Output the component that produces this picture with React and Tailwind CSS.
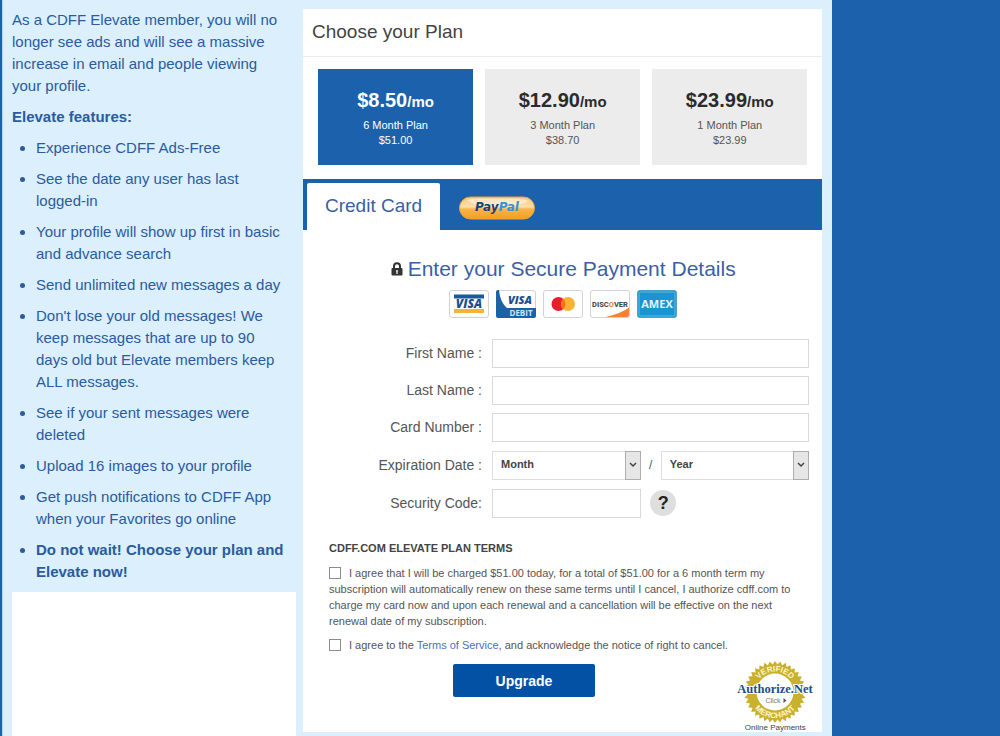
import { useState } from "react";

const features = [
  "Experience CDFF Ads-Free",
  "See the date any user has last logged-in",
  "Your profile will show up first in basic and advance search",
  "Send unlimited new messages a day",
  "Don't lose your old messages! We keep messages that are up to 90 days old but Elevate members keep ALL messages.",
  "See if your sent messages were deleted",
  "Upload 16 images to your profile",
  "Get push notifications to CDFF App when your Favorites go online",
];

const plans = [
  { id: 6, price: "$8.50", name: "6 Month Plan", total: "$51.00" },
  { id: 3, price: "$12.90", name: "3 Month Plan", total: "$38.70" },
  { id: 1, price: "$23.99", name: "1 Month Plan", total: "$23.99" },
];

const months = ["01", "02", "03", "04", "05", "06", "07", "08", "09", "10", "11", "12"];
const years = ["2024", "2025", "2026", "2027", "2028", "2029", "2030"];

const inputClass =
  "block h-[29px] w-full min-w-0 border border-[#d9d9d9] bg-white px-2 text-xs text-[#333] outline-none";

const Sidebar = () => (
  <aside className="flex flex-col pt-[9px] text-[15px] leading-[22px] text-[#2a5b9d]">
    <div className="pr-[10px]">
      <p>
        As a CDFF Elevate member, you will no longer see ads and will see a
        massive increase in email and people viewing your profile.
      </p>
      <h2 className="mt-[9px] font-bold">Elevate features:</h2>
      <ul className="mt-[9px] flex list-disc flex-col gap-[9px] pl-6">
        {features.map((feature) => (
          <li key={feature}>{feature}</li>
        ))}
        <li className="font-bold">Do not wait! Choose your plan and Elevate now!</li>
      </ul>
    </div>
    <div className="mt-[9px] flex-1 bg-white" />
  </aside>
);

const PlanCard = ({ plan, active, onSelect }) => (
  <button
    type="button"
    onClick={() => onSelect(plan.id)}
    className={
      active
        ? "flex h-24 flex-col items-center justify-center bg-[#1c61ab] pb-[2px] text-[11px] leading-[15px] text-white"
        : "flex h-24 flex-col items-center justify-center bg-[#ececec] pb-[2px] text-[11px] leading-[15px] text-[#555]"
    }
  >
    <span
      className={
        active
          ? "text-xl leading-8 font-bold text-white"
          : "text-xl leading-8 font-bold text-[#2b2b2b]"
      }
    >
      {plan.price}
      <span className="text-[15px]">/mo</span>
    </span>
    <span>{plan.name}</span>
    <span>{plan.total}</span>
  </button>
);

const PayPalBadge = () => (
  <svg width="76" height="24" viewBox="0 0 76 24" role="img" aria-label="PayPal">
    <defs>
      <linearGradient id="gold" x1="0" y1="0" x2="0" y2="1">
        <stop offset="0" stopColor="#fbc877" />
        <stop offset="0.45" stopColor="#fddfae" />
        <stop offset="0.55" stopColor="#f9b549" />
        <stop offset="1" stopColor="#f59d20" />
      </linearGradient>
    </defs>
    <rect x="0.5" y="1" width="75" height="22" rx="11" fill="url(#gold)" stroke="#e9a046" />
    <path d="M8 4Q12 2.5 18 2.5H58Q65 2.5 69 5Q62 10 38 11Q14 10 8 4Z" fill="#fff" opacity="0.5" />
    <g
      fontFamily="'DejaVu Sans', sans-serif"
      fontSize="12"
      fontWeight="700"
      fontStyle="italic"
    >
      <text x="38" y="15" textAnchor="middle" fill="#1d3f77">
        Pay<tspan fill="#3792cd">Pal</tspan>
      </text>
    </g>
  </svg>
);

const LockIcon = () => (
  <svg width="12" height="14" viewBox="0 0 12 14" aria-hidden="true">
    <path d="M3 6V4.2a3 3 0 0 1 6 0V6" fill="none" stroke="#333" strokeWidth="2" />
    <rect x="0.5" y="6" width="11" height="7.5" rx="1" fill="#333" />
    <path d="M6 8a1 1 0 0 1 .6 1.8V12H5.4V9.8A1 1 0 0 1 6 8Z" fill="#fff" />
  </svg>
);

const logoFont = "'Open Sans', 'Liberation Sans', sans-serif";

const VisaLogo = () => (
  <svg width="40" height="28" viewBox="0 0 40 28" role="img" aria-label="Visa">
    <rect x="0.5" y="0.5" width="39" height="27" rx="2.5" fill="#fff" stroke="#d2d2d2" />
    <rect x="5" y="4.5" width="30" height="4" fill="#1a5a9c" />
    <rect x="5" y="19" width="30" height="4" fill="#f3b33d" />
    <text x="20" y="18" textAnchor="middle" fontFamily={logoFont} fontSize="12" fontWeight="800" fontStyle="italic" fill="#1d4f8c">VISA</text>
  </svg>
);

const VisaDebitLogo = () => (
  <svg width="40" height="28" viewBox="0 0 40 28" role="img" aria-label="Visa Debit">
    <rect x="0.5" y="0.5" width="39" height="27" rx="2.5" fill="#fff" stroke="#d2d2d2" />
    <path d="M0 2Q0 0 2 0H3Q4 12 11 18H40V26Q40 28 38 28H2Q0 28 0 26Z" fill="#1b62a5" />
    <text x="24" y="14" textAnchor="middle" fontFamily={logoFont} fontSize="11" fontWeight="800" fontStyle="italic" fill="#1d4f8c">VISA</text>
    <text x="25" y="26" textAnchor="middle" fontFamily={logoFont} fontSize="8" fontWeight="700" fill="#cfe5f7">DEBIT</text>
  </svg>
);

const MastercardLogo = () => (
  <svg width="40" height="28" viewBox="0 0 40 28" role="img" aria-label="Mastercard">
    <rect x="0.5" y="0.5" width="39" height="27" rx="2.5" fill="#fff" stroke="#d2d2d2" />
    <circle cx="15.5" cy="14" r="7" fill="#e5202c" />
    <circle cx="25" cy="14" r="7" fill="#f9b233" />
    <path d="M20.2 8.8a7 7 0 0 1 0 10.4a7 7 0 0 1 0-10.4Z" fill="#f47216" />
  </svg>
);

const DiscoverLogo = () => (
  <svg width="40" height="28" viewBox="0 0 40 28" role="img" aria-label="Discover">
    <rect x="0.5" y="0.5" width="39" height="27" rx="2.5" fill="#fff" stroke="#d2d2d2" />
    <path d="M16 27Q32 23 39 17.5V25Q39 27 37 27Z" fill="#f58233" />
    <text x="20" y="17" textAnchor="middle" fontFamily="Roboto, sans-serif" fontSize="7.5" fontWeight="800" fill="#4a4a4a">
      DISC<tspan fill="#f58233">O</tspan>VER
    </text>
  </svg>
);

const AmexLogo = () => (
  <svg width="40" height="28" viewBox="0 0 40 28" role="img" aria-label="American Express">
    <rect x="0.5" y="0.5" width="39" height="27" rx="2.5" fill="#1b94d2" stroke="#4a9fc9" />
    <rect x="2" y="2" width="36" height="24" rx="1.5" fill="none" stroke="#5cb8e4" />
    <text x="20" y="18" textAnchor="middle" fontFamily={logoFont} fontSize="11" fontWeight="700" fill="#e2f4fd">AMEX</text>
  </svg>
);

const TextRow = ({ id, label }) => (
  <>
    <label htmlFor={id} className="pb-[2px] text-right">{label}</label>
    <input id={id} type="text" className={inputClass} />
  </>
);

const SelectBox = ({ label, options }) => (
  <div className="relative min-w-0 flex-1">
    <select
      aria-label={label}
      className="block h-[29px] w-full appearance-none border border-[#dedede] bg-white px-2 text-[11px] font-bold text-[#444] outline-none"
    >
      <option>{label}</option>
      {options.map((option) => (
        <option key={option}>{option}</option>
      ))}
    </select>
    <span className="pointer-events-none absolute inset-y-0 right-0 flex w-4 items-center justify-center border border-[#adadad] bg-[#e6e6e6]">
      <svg width="8" height="6" viewBox="0 0 8 6" aria-hidden="true">
        <path d="M1 1l3 3l3-3" fill="none" stroke="#444" strokeWidth="1.5" />
      </svg>
    </span>
  </div>
);

const Checkbox = () => (
  <input
    type="checkbox"
    className="mr-2 inline-block size-3 appearance-none border border-[#8c8c8c] bg-white align-[-2px] checked:bg-[#1c61ab]"
  />
);

// Gear-like outline of the seal: alternating outer and inner points
const sealTeeth = Array.from({ length: 72 }, (_, i) => {
  const r = i % 2 ? 27.5 : 31;
  const a = (i / 72) * Math.PI * 2;
  return `${(38 + r * Math.cos(a)).toFixed(2)},${(32 + r * Math.sin(a)).toFixed(2)}`;
}).join(" ");

const AuthorizeSeal = () => (
  <a href="#verify" className="flex flex-col items-center text-[8px] leading-[9px] text-[#444]">
    <svg width="76" height="63" viewBox="0 0 76 63" role="img" aria-label="Authorize.Net Verified Merchant">
      <polygon points={sealTeeth} fill="#c9b02d" />
      <circle cx="38" cy="32" r="18.5" fill="#fff" />
      <path id="sealTop" d="M17.5 32a20.5 20.5 0 0 1 41 0" fill="none" />
      <path id="sealBottom" d="M12 32a26 26 0 0 0 52 0" fill="none" />
      <g fontFamily="'Liberation Sans', sans-serif" fontSize="8" fontWeight="700" fill="#fdf6cf" textAnchor="middle">
        <text><textPath href="#sealTop" startOffset="50%">VERIFIED</textPath></text>
        <text><textPath href="#sealBottom" startOffset="50%">MERCHANT</textPath></text>
      </g>
      <text x="38" y="33" textAnchor="middle" fontFamily="'Liberation Serif', serif" fontSize="12.5" fontWeight="700" fill="#1b5089" stroke="#fff" strokeWidth="2" paintOrder="stroke">Authorize.Net</text>
      <text x="36" y="43" textAnchor="middle" fontFamily="'Liberation Sans', sans-serif" fontSize="7" fill="#777">Click</text>
      <path d="M46.5 38v5l3-2.5Z" fill="#555" />
    </svg>
    Online Payments
  </a>
);

export default function App() {
  const [plan, setPlan] = useState(6);

  return (
    <div className="min-h-screen bg-[#1c61ab] pl-[2px] font-['Liberation_Sans',Arial,sans-serif]">
      <div className="grid min-h-screen w-[83.2%] grid-cols-[284px_1fr] gap-[7px] border-l border-[#b5d3ee] bg-[#dbeffd] pr-[10px] pl-[9px]">
        <Sidebar />

        <main className="mt-[9px] mb-1 bg-white">
          <h1 className="border-b border-[#ececec] px-[9px] pt-[11px] pb-3 text-[19px] leading-6 text-[#444]">
            Choose your Plan
          </h1>

          <div className="grid grid-cols-3 gap-3 px-[15px] pt-3 pb-[14px]">
            {plans.map((item) => (
              <PlanCard key={item.id} plan={item} active={plan === item.id} onSelect={setPlan} />
            ))}
          </div>

          <div className="flex h-[51px] bg-[#1c61ab] pt-1 pl-1">
            <button type="button" className="rounded-t-[2px] bg-white px-[18px] text-[19px] text-[#3a5fa3]">
              Credit Card
            </button>
            <button type="button" className="ml-[19px] pt-[3px]">
              <PayPalBadge />
            </button>
          </div>

          <form className="pr-[13px] pl-[26px]" onSubmit={(e) => e.preventDefault()}>
            <h2 className="flex items-center justify-center gap-[5px] pt-[27px] pr-3 text-[21px] leading-6 text-[#3a5fa8]">
              <LockIcon />
              Enter your Secure Payment Details
            </h2>
            <div className="mt-[9px] flex justify-center gap-[7px] pr-3">
              <VisaLogo />
              <VisaDebitLogo />
              <MastercardLogo />
              <DiscoverLogo />
              <AmexLogo />
            </div>

            <div className="mt-[21px] grid grid-cols-[153px_1fr] items-center gap-x-[10px] gap-y-2 text-sm text-[#555]">
              <TextRow id="first-name" label="First Name :" />
              <TextRow id="last-name" label="Last Name :" />
              <TextRow id="card-number" label="Card Number :" />
              <span className="text-right">Expiration Date :</span>
              <div className="flex h-[30px] items-center">
                <SelectBox label="Month" options={months} />
                <span className="w-5 text-center text-xs">/</span>
                <SelectBox label="Year" options={years} />
              </div>
              <label htmlFor="security-code" className="text-right">Security Code:</label>
              <div className="flex h-[30px] items-center gap-[9px]">
                <div className="w-[47%]">
                  <input id="security-code" type="text" className={inputClass} />
                </div>
                <button type="button" className="size-[26px] rounded-full bg-[#dedede] text-lg leading-[26px] font-bold text-[#222]">
                  ?
                </button>
              </div>
            </div>

            <h3 className="mt-[22px] text-[11px] leading-4 font-bold text-[#444]">
              CDFF.COM ELEVATE PLAN TERMS
            </h3>
            <label className="mt-[9px] block text-[11px] leading-4 text-[#555]">
              <Checkbox />
              I agree that I will be charged $51.00 today, for a total of $51.00 for a 6 month term my
              subscription will automatically renew on these same terms until I cancel, I authorize cdff.com to
              charge my card now and upon each renewal and a cancellation will be effective on the next
              renewal date of my subscription.
            </label>
            <label className="mt-2 block text-[11px] leading-4 text-[#555]">
              <Checkbox />
              I agree to the <a href="#terms" className="text-[#4a6fc0]">Terms of Service</a>, and acknowledge the
              notice of right to cancel.
            </label>

            <div className="grid grid-cols-[124px_142px_1fr] items-start">
              <button
                type="submit"
                className="col-start-2 mt-[11px] h-[33px] rounded-[2px] bg-[#0351a5] text-sm font-bold text-white"
              >
                Upgrade
              </button>
              <div className="mt-[7px] -mr-1 justify-self-end">
                <AuthorizeSeal />
              </div>
            </div>
          </form>
        </main>
      </div>
    </div>
  );
}
